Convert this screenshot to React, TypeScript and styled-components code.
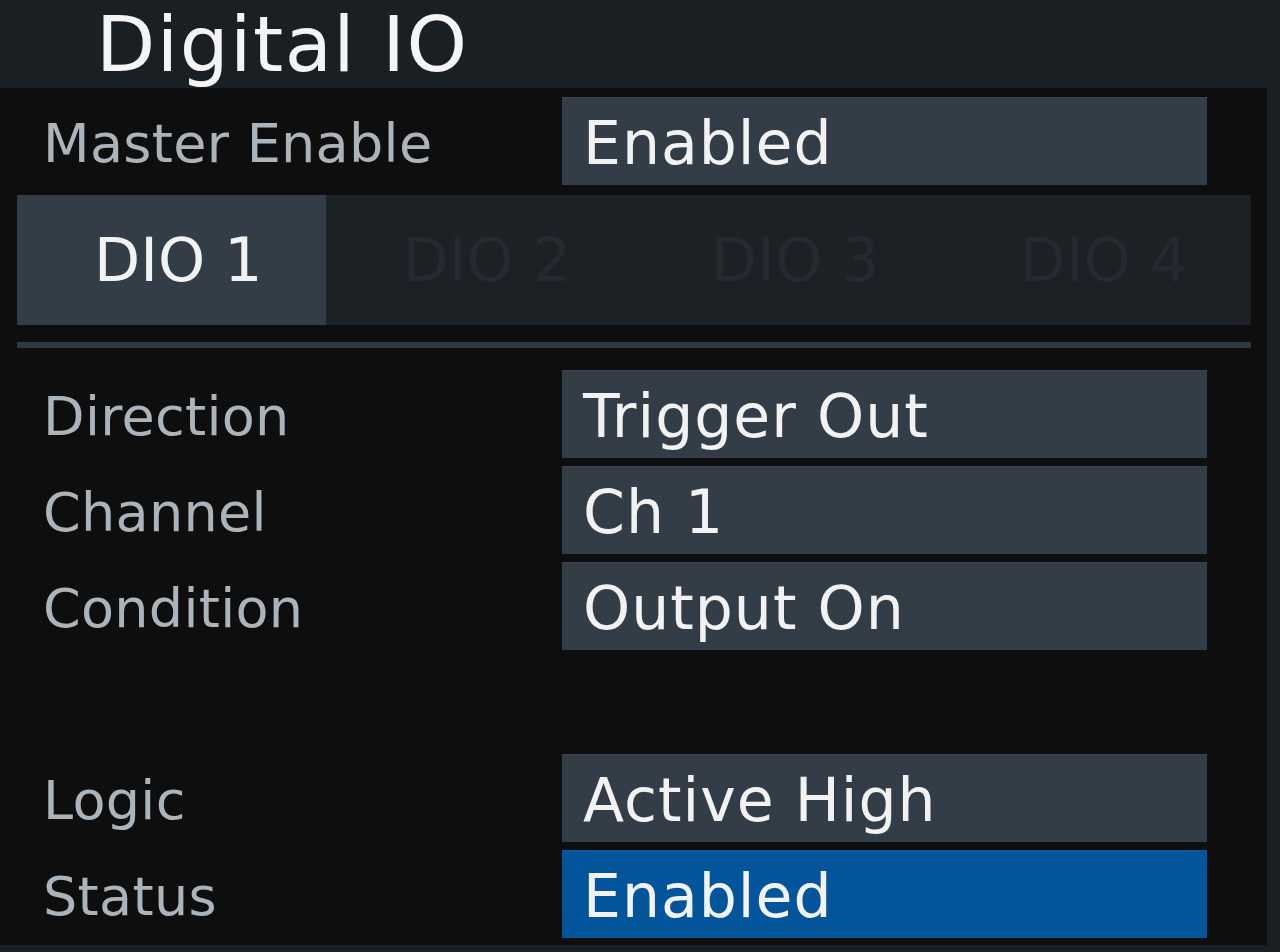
import styled, { createGlobalStyle } from "styled-components"

const GlobalStyle = createGlobalStyle`
  html, body {
    margin: 0;
    padding: 0;
    background: #1a1f23;
  }
  body {
    font-family: "DejaVu Sans", "Liberation Sans", sans-serif;
  }
`

const rows = [
  { label: "Direction", value: "Trigger Out" },
  { label: "Channel", value: "Ch 1" },
  { label: "Condition", value: "Output On" },
  null,
  { label: "Logic", value: "Active High" },
  { label: "Status", value: "Enabled", highlight: true },
]

const tabs = ["DIO 1", "DIO 2", "DIO 3", "DIO 4"]

const App = () => {
  return (
    <Screen>
      <GlobalStyle />
      <Header>Digital IO</Header>
      <Panel>
        <Row>
          <Label>Master Enable</Label>
          <Value>Enabled</Value>
        </Row>
        <TabBar>
          {tabs.map((t, i) => (
            <Tab key={t} active={i === 0}>{t}</Tab>
          ))}
        </TabBar>
        <Divider />
        <Rows>
          {rows.map((r, i) =>
            r ? (
              <Row key={i}>
                <Label>{r.label}</Label>
                <Value highlight={r.highlight}>{r.value}</Value>
              </Row>
            ) : (
              <Spacer key={i} />
            )
          )}
        </Rows>
      </Panel>
    </Screen>
  )
}

export default App

const Screen = styled.div`
  width: 1280px;
  height: 952px;
  background: #1a1f23;
  overflow: hidden;
`
const Header = styled.div`
  height: 88px;
  padding-left: 96px;
  font-size: 77px;
  line-height: 90px;
  letter-spacing: 1.5px;
  color: #f4f4f4;
  box-sizing: border-box;
  white-space: nowrap;
`
const Panel = styled.div`
  width: 1267px;
  height: 857px;
  background: #0e0e0f;
  padding-top: 9px;
  box-sizing: border-box;
`
const Row = styled.div`
  display: grid;
  grid-template-columns: 562px 645px;
  grid-template-rows: 88px;
  height: 88px;
`
const Label = styled.div`
  padding-left: 43px;
  padding-top: 4px;
  font-size: 54px;
  line-height: 86px;
  color: #acb4bb;
  letter-spacing: 0.3px;
  white-space: nowrap;
  overflow: hidden;
`
const Value = styled.div<{ highlight?: boolean }>`
  background: ${p => (p.highlight ? "#02559a" : "#323d47")};
  border-top: 1px solid ${p => (p.highlight ? "#0a5da2" : "#38444f")};
  box-sizing: border-box;
  padding-left: 21px;
  padding-top: 3px;
  font-size: 60px;
  line-height: 84px;
  color: #f2f2f2;
  letter-spacing: 1px;
  white-space: nowrap;
  overflow: hidden;
`
const TabBar = styled.div`
  display: grid;
  grid-template-columns: repeat(4, 1fr);
  margin: 10px 16px 0 17px;
  height: 130px;
  background: #1b2125;
`
const Tab = styled.div<{ active?: boolean }>`
  display: flex;
  align-items: center;
  justify-content: center;
  padding-left: 14px;
  background: ${p => (p.active ? "#323d47" : "transparent")};
  color: ${p => (p.active ? "#f2f2f2" : "#242a2f")};
  font-size: 60px;
`
const Divider = styled.div`
  margin: 17px 16px 0 17px;
  height: 6px;
  background: #2e3841;
`
const Rows = styled.div`
  display: flex;
  flex-direction: column;
  gap: 8px;
  margin-top: 22px;
`
const Spacer = styled.div`
  height: 88px;
`
